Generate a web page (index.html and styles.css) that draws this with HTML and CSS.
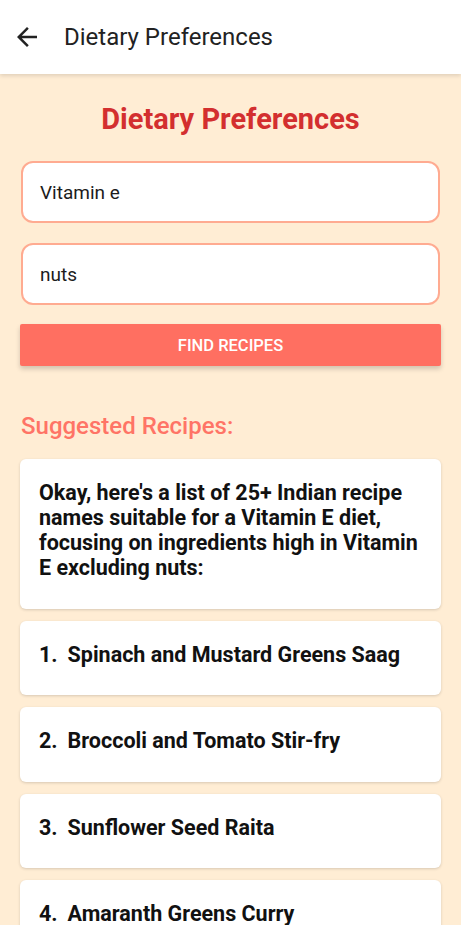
FILE: index.html
```html
<!DOCTYPE html>
<html>
<head>
<meta charset="utf-8">
<link rel="stylesheet" href="styles.css">
</head>
<body>
<header class="appbar">
  <svg class="back" width="30" height="30" viewBox="0 0 24 24"><path d="M20 11H7.83l5.59-5.59L12 4l-8 8 8 8 1.41-1.41L7.83 13H20v-2z" fill="#222"/></svg>
  <span class="appbar-title">Dietary Preferences</span>
</header>
<main class="content">
  <h1 class="heading">Dietary Preferences</h1>
  <div class="field">Vitamin e</div>
  <div class="field">nuts</div>
  <button class="btn">FIND RECIPES</button>
  <h2 class="sub">Suggested Recipes:</h2>
  <div class="cards">
    <div class="card">Okay, here's a list of 25+ Indian recipe names suitable for a Vitamin E diet, focusing on ingredients high in Vitamin E excluding nuts:</div>
    <div class="card item"><span class="num">1.</span><span>Spinach and Mustard Greens Saag</span></div>
    <div class="card item"><span class="num">2.</span><span>Broccoli and Tomato Stir-fry</span></div>
    <div class="card item"><span class="num">3.</span><span>Sunflower Seed Raita</span></div>
    <div class="card item"><span class="num">4.</span><span>Amaranth Greens Curry</span></div>
  </div>
</main>
</body>
</html>
```
FILE: styles.css
```css
html, body {
  margin: 0;
  padding: 0;
  background: #FFEDD4;
  font-family: Roboto, "Noto Sans", sans-serif;
  height: 925px;
  overflow: hidden;
}
.appbar {
  height: 74px;
  background: #fff;
  display: flex;
  align-items: center;
  padding-left: 12px;
  box-shadow: 0 2px 4px rgba(0,0,0,0.12);
  position: relative;
  z-index: 1;
}
.back {
  width: 30px;
  height: 30px;
}
.appbar-title {
  margin-left: 22px;
  font-size: 24px;
  color: #222;
}
.content {
  padding: 0 20px;
  display: flex;
  flex-direction: column;
}
.heading {
  margin: 27px 0 0;
  text-align: center;
  font-size: 29px;
  font-weight: 700;
  color: #D32F2F;
  line-height: 36px;
}
.field {
  margin: 24px 1px 0;
  height: 58px;
  border: 2px solid #FFAB91;
  border-radius: 12px;
  background: #fff;
  display: flex;
  align-items: center;
  padding-left: 17px;
  font-size: 19px;
  color: #1c1c1c;
}
.field + .field {
  margin-top: 20px;
}
.btn {
  margin-top: 19px;
  height: 42px;
  border: none;
  border-radius: 2px;
  background: #FF6F61;
  color: #fff;
  font-family: Roboto, sans-serif;
  font-size: 16.5px;
  font-weight: 500;
  box-shadow: 0 3px 5px rgba(0,0,0,0.18);
}
.sub {
  margin: 45px 0 0 1px;
  font-size: 24px;
  font-weight: 500;
  color: #FF7466;
  line-height: 30px;
}
.cards {
  margin-top: 18px;
  display: flex;
  flex-direction: column;
  gap: 12px;
}
.card {
  background: #fff;
  border-radius: 6px;
  box-shadow: 0 1px 3px rgba(0,0,0,0.16);
  padding: 21px 19px 28.5px;
  font-size: 21.5px;
  font-weight: 700;
  line-height: 25px;
  color: #111;
}
.item {
  display: flex;
  gap: 10px;
}
```
